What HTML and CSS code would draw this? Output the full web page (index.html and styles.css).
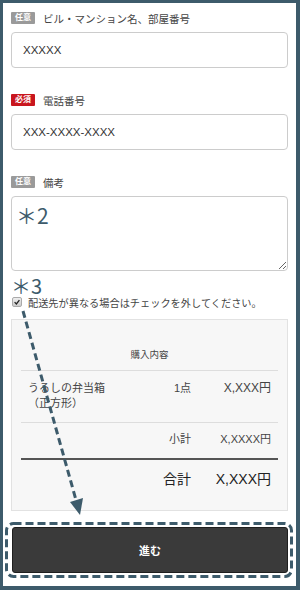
FILE: index.html
```html
<!DOCTYPE html>
<html lang="ja">
<head>
  <meta charset="UTF-8">
  <title>ご注文情報</title>
  <link rel="stylesheet" href="styles.css">
</head>
<body>
  <div class="page">

    <div class="campo">
      <div class="etiqueta"><span class="badge opcional">任意</span>ビル・マンション名、部屋番号</div>
      <input type="text" class="entrada" value="XXXXX">
    </div>

    <div class="campo">
      <div class="etiqueta"><span class="badge requerido">必須</span>電話番号</div>
      <input type="text" class="entrada" value="XXX-XXXX-XXXX">
    </div>

    <div class="campo nota">
      <div class="etiqueta"><span class="badge opcional">任意</span>備考</div>
      <textarea class="area"></textarea>
      <span class="marca marca-2">＊2</span>
    </div>

    <label class="check">
      <span class="caja"><svg viewBox="0 0 10 10" width="8" height="8"><path d="M2 5.2 L4.2 7.4 L8 2.6" fill="none" stroke="#222" stroke-width="1.6"/></svg></span>
      配送先が異なる場合はチェックを外してください。
    </label>

    <div class="resumen">
      <div class="resumen-titulo">購入内容</div>
      <div class="fila producto">
        <span class="nombre">うるしの弁当箱<br>（正方形）</span>
        <span class="cant">1点</span>
        <span class="precio">X,XXX円</span>
      </div>
      <div class="fila subtotal">
        <span></span>
        <span class="cant">小計</span>
        <span class="precio">X,XXXX円</span>
      </div>
      <div class="fila total">
        <span></span>
        <span class="cant">合計</span>
        <span class="precio">X,XXX円</span>
      </div>
    </div>

    <div class="acciones">
      <button class="avanzar">進む</button>
    </div>

    <span class="marca marca-3">＊3</span>

    <svg class="anotaciones" width="293" height="583" viewBox="3 3 293 583">
      <line x1="23" y1="311" x2="76" y2="500" stroke="#3d5b6b" stroke-width="3" stroke-dasharray="7 4"/>
      <polygon points="80,515 70,502 83,498" fill="#3d5b6b"/>
      <rect x="6.5" y="523.5" width="285" height="53" rx="7" fill="none" stroke="#3d5b6b" stroke-width="3" stroke-dasharray="8 4"/>
    </svg>

  </div>
</body>
</html>
```

FILE: styles.css
```css
* { box-sizing: border-box; }
html, body {
  margin: 0; padding: 0;
  background: #3d5b6b;
  font-family: "Liberation Sans", "Noto Sans CJK JP", sans-serif;
  color: #333;
}
.page {
  position: relative;
  margin: 3px 4px 0 3px; height: 583px;
  padding: 8px 8px 0;
  background: #fff;
}

.campo { margin-bottom: 25px; }
.campo.nota { position: relative; margin-bottom: 24px; }
.etiqueta {
  display: flex; align-items: center; gap: 8px;
  height: 14px; margin-bottom: 7px;
  font-size: 10.5px; color: #444;
}
.badge {
  display: inline-block; width: 24px; height: 12px; line-height: 12px;
  border-radius: 1px; text-align: center;
  font-size: 8px; font-weight: bold; color: #fff;
}
.opcional { background: #9a9a9a; }
.requerido { background: #c9161e; }

.entrada, .area {
  display: block; width: 100%;
  border: 1px solid #ccc; border-radius: 4px;
  background: #fff; font-family: inherit; color: #333;
}
.entrada { height: 36px; padding: 0 11px; font-size: 11.5px; }
.area { height: 75px; resize: vertical; }

.marca {
  position: absolute;
  font-family: "Noto Sans CJK JP", sans-serif;
  font-size: 21px; line-height: 1; color: #3d5b6b;
}
.marca-2 { left: 5px; top: 30px; }
.marca-3 { left: 8px; top: 273px; font-size: 20px; }

.check {
  display: flex; align-items: center; gap: 6px;
  height: 14px; padding-left: 1px;
  font-size: 10.2px; color: #444;
}
.caja {
  display: flex; align-items: center; justify-content: center;
  width: 10px; height: 10px;
  border: 1px solid #aaa; border-radius: 2px;
  background: linear-gradient(#eee, #ccc);
}

.resumen {
  margin-top: 10px; padding: 0 9px;
  background: #f7f7f7; border: 1px solid #e2e2e2;
}
.resumen-titulo {
  padding: 28px 0 8px; line-height: 14px;
  text-align: center; font-size: 9.5px; color: #444;
  border-bottom: 1px solid #ddd;
}
.fila {
  display: grid; grid-template-columns: 1fr auto 80px;
  padding: 0 7px; color: #444;
}
.fila .cant, .fila .precio { text-align: right; }
.producto {
  padding-top: 10px; padding-bottom: 11px; line-height: 15px;
  font-size: 11px; border-bottom: 1px solid #ddd;
}
.producto .precio { font-size: 12px; }
.subtotal {
  padding-top: 9px; padding-bottom: 11px; line-height: 15px;
  font-size: 11px; border-bottom: 2px solid #555;
}
.total {
  padding-top: 10px; padding-bottom: 22px; line-height: 18px;
  font-size: 14px; color: #222;
}

.acciones { margin-top: 16px; padding: 0 0 0 1px; }
.avanzar {
  display: block; width: 100%; height: 46px;
  background: #3a3a3a; border: 1px solid #1e1e1e; border-radius: 3px;
  color: #fff; font-family: "Noto Sans CJK JP", sans-serif;
  font-size: 11px; font-weight: bold;
}

.anotaciones {
  position: absolute; left: 0; top: 0;
  pointer-events: none;
}
```
